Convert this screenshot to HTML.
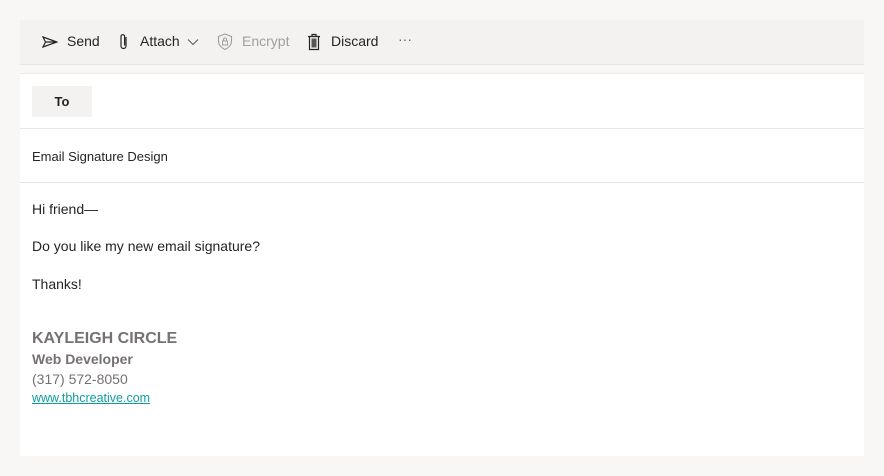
<!DOCTYPE html>
<html><head><style>
body{margin:0;width:884px;height:476px;background:#f8f7f6;font-family:"Liberation Sans",sans-serif;position:relative;overflow:hidden}
.tb{position:absolute;left:20px;top:20px;width:844px;height:44px;background:#f3f2f1;border-bottom:1px solid #e8e6e4}
.tb span{position:absolute;top:13px;font-size:14px;color:#252423}
.main{position:absolute;left:20px;top:73px;width:844px;height:382px;background:#fff;border-top:1px solid #edebe9}
.to{position:absolute;left:12px;top:12px;width:60px;height:31px;background:#f3f2f1;border-radius:2px;font-size:13px;font-weight:bold;color:#252423;text-align:center;line-height:31px}
.line{position:absolute;left:0;width:844px;height:1px;background:#e8e6e4}
.t{position:absolute;left:12px;font-size:14px;color:#252423}
svg{position:absolute}
</style></head><body>
<div class="tb">
<svg style="left:22px;top:16px" width="16" height="12" viewBox="0 0 16 12"><path d="M1 1 L15 6 L1 11 L3.5 6 Z M3.5 6 H15" fill="none" stroke="#252423" stroke-width="1.2"/></svg>
<span style="left:47px">Send</span>
<svg style="left:99px;top:13px" width="10" height="18" viewBox="0 0 10 18"><path d="M7 4 V13 a2.5 2.5 0 0 1 -5 0 V3.5 a1.8 1.8 0 0 1 3.6 0 V12.5" fill="none" stroke="#252423" stroke-width="1.2"/></svg>
<span style="left:120px">Attach</span>
<svg style="left:167px;top:18px" width="12" height="8" viewBox="0 0 12 8"><path d="M1 1.5 L6 6.5 L11 1.5" fill="none" stroke="#605e5c" stroke-width="1.1"/></svg>
<svg style="left:197px;top:13px" width="16" height="18" viewBox="0 0 16 18"><path d="M8 1 L14.5 3.5 V8 C14.5 12 11.5 15 8 16.5 C4.5 15 1.5 12 1.5 8 V3.5 Z" fill="none" stroke="#a19f9d" stroke-width="1.1"/><rect x="5.5" y="8" width="5" height="4" fill="none" stroke="#a19f9d"/><path d="M6.5 8 V6.5 a1.5 1.5 0 0 1 3 0 V8" fill="none" stroke="#a19f9d"/></svg>
<span style="left:222px;color:#a19f9d">Encrypt</span>
<svg style="left:287px;top:13px" width="14" height="18" viewBox="0 0 14 18"><path d="M1 3.5 H13 M5 3.5 V1.5 H9 V3.5 M2.5 3.5 V16.5 H11.5 V3.5" fill="none" stroke="#252423" stroke-width="1.2"/><rect x="4.5" y="5.5" width="5" height="9" fill="#555"/></svg>
<span style="left:311px">Discard</span>
<span style="left:378px;color:#605e5c;top:11px">···</span>
</div>
<div class="main">
<div class="to">To</div>
<div class="line" style="top:54px"></div>
<div class="t" style="top:75px;font-size:13px">Email Signature Design</div>
<div class="line" style="top:108px"></div>
<div class="t" style="top:127px">Hi friend—</div>
<div class="t" style="top:164px">Do you like my new email signature?</div>
<div class="t" style="top:202px">Thanks!</div>
<div class="t" style="top:256px;font-size:16px;font-weight:bold;color:#767171">KAYLEIGH CIRCLE</div>
<div class="t" style="top:277px;font-size:14px;font-weight:bold;color:#767171">Web Developer</div>
<div class="t" style="top:297px;font-size:14px;color:#767171">(317) 572-8050</div>
<div class="t" style="top:317px;font-size:12.5px;color:#0f9e9e;text-decoration:underline">www.tbhcreative.com</div>
</div>
</body></html>
